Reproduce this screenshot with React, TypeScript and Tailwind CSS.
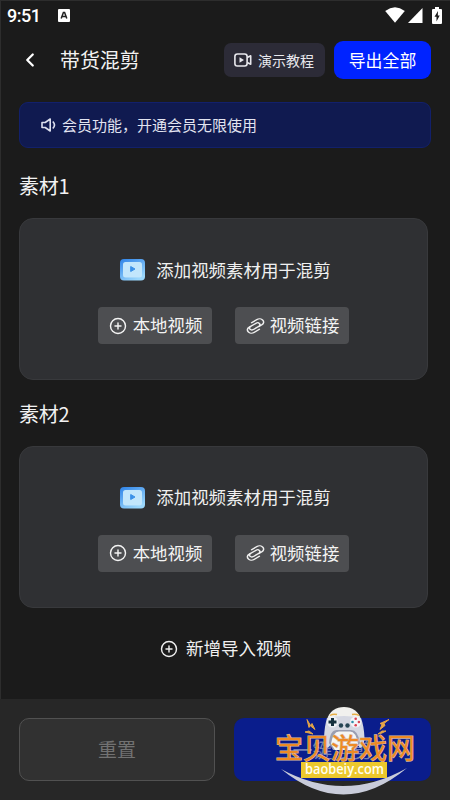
import { ChevronLeft, CirclePlus } from 'lucide-react';

const SECTIONS = [
  { id: 1, title: '素材1' },
  { id: 2, title: '素材2' },
];

function StatusBar() {
  return (
    <div className="flex h-8 items-center pl-[7px] pr-[8px] text-white">
      <span className="w-[51px] font-[Roboto] text-[18px] font-medium leading-none tracking-[-0.5px]">9:51</span>
      <svg width="12" height="13" viewBox="0 0 12 13" className="-mt-[2px]">
        <rect width="12" height="13" rx="1" fill="#fff" />
        <path d="M3.200 9.500 5.400 3.500h1.200L8.800 9.500M4.200 7.500h3.600" fill="none" stroke="#222" strokeWidth="1.500" />
      </svg>
      <svg width="20" height="16" viewBox="0 0 20 16" className="-mt-[2px] ml-auto">
        <path d="M0.200 4Q10-3.400 19.800 4L10 15.800Z" fill="#fff" />
      </svg>
      <svg width="15" height="15" viewBox="0 0 15 15" className="-mt-px ml-[3px]">
        <path d="M14.500 0v15H0Z" fill="#fff" />
      </svg>
      <svg width="10" height="17" viewBox="0 0 10 17" className="-mt-[2px] ml-[9px]">
        <path d="M3 0h4v2h2q1 0 1 1v13q0 1-1 1H1q-1 0-1-1V3q0-1 1-1h2Z" fill="#fff" />
        <path d="M6 4 2.500 9.700h2V14.500L7.700 8.500H5.800Z" fill="#1b1b1b" />
      </svg>
    </div>
  );
}

function CameraIcon() {
  return (
    <svg width="18" height="14" viewBox="0 0 18 14" fill="none" stroke="#e8e8ed" strokeWidth="1.600" strokeLinejoin="round">
      <rect x="0.900" y="1" width="12.200" height="12" rx="2.500" />
      <path d="M13.200 4.500 16.700 2.800v8.400l-3.500-1.700" />
      <path d="M5.500 4.300v5.400L10 7Z" fill="#e8e8ed" stroke="none" />
    </svg>
  );
}

function SpeakerIcon() {
  return (
    <svg width="16" height="14" viewBox="0 0 16 14" fill="none" stroke="#dcdfef" strokeWidth="1.600" strokeLinejoin="round">
      <path d="M1 4.500h3.200L9.200 1v12L4.200 9.500H1Z" />
      <path d="M11.800 3.500q3.400 3.500 0 7" />
    </svg>
  );
}

function VideoIcon() {
  return (
    <svg width="25" height="22" viewBox="0 0 25 22">
      <defs>
        <linearGradient id="frame" x1="0" y1="0" x2="0.600" y2="1">
          <stop offset="0" stopColor="#2d82e8" />
          <stop offset="1" stopColor="#9bd7fc" />
        </linearGradient>
      </defs>
      <rect width="25" height="21.500" rx="4" fill="url(#frame)" />
      <rect x="3" y="3" width="19" height="15.500" rx="2.500" fill="#c2e6fc" />
      <path d="M10.700 7.500v5L15 10Z" fill="#3b91e8" stroke="#3b91e8" strokeLinejoin="round" />
    </svg>
  );
}

function LinkIcon() {
  return (
    <svg width="19" height="16" viewBox="0 0 19 16" fill="none" stroke="#f0f0f0" strokeWidth="1.350" strokeLinecap="round">
      <g transform="translate(9.500 8) scale(1.200 0.950) rotate(-37) translate(-9.500 -8)">
        <path d="M10 12.700H4.400A3.400 3.400 0 0 1 4.400 5.900H11.700A2 2 0 0 1 11.700 9.900H6" />
        <path d="M9 3.300H14.600A3.400 3.400 0 0 1 14.600 10.100H11.500M5.800 9.900A2 2 0 0 1 5.800 5.900" />
      </g>
    </svg>
  );
}

function MaterialCard({ title }: { title: string }) {
  return (
    <section>
      <h2 className="h-[30px] text-[20px] leading-[30px] tracking-[-0.2px] text-[#f2f2f2]">{title}</h2>
      <div className="mt-[17px] flex h-[162px] w-[409px] flex-col items-center rounded-[14px] border border-[#38393c] bg-[#2f3033] pt-[38px]">
        <div className="flex h-[26px] items-center gap-[11px] pl-[4px] text-[17.450px] text-[#f0f0f0]">
          <VideoIcon />
          <span>添加视频素材用于混剪</span>
        </div>
        <div className="mt-[24px] flex gap-[23px]">
          <button className="flex h-[37px] w-[114px] items-center justify-center gap-[6px] rounded bg-[#4d4e51] pl-px text-[17.400px] text-[#f4f4f4]">
            <CirclePlus size={18} strokeWidth={1.9} />
            本地视频
          </button>
          <button className="flex h-[37px] w-[114px] items-center justify-center gap-[5px] rounded bg-[#4d4e51] pl-px text-[17.400px] text-[#f4f4f4]">
            <LinkIcon />
            视频链接
          </button>
        </div>
      </div>
    </section>
  );
}

function SiteLogo() {
  return (
    <svg width="144" height="94" viewBox="0 0 144 94" className="absolute bottom-0 left-[273px]">
      {/* smile */}
      <path d="M8 63Q71 114.500 134 62Q71 97.500 8 63Z" fill="#c9ccda" />
      {/* head and controller */}
      <path d="M54 14C56 5 63 1 71 1S86 5 88 14V38H54Z" fill="#f1f1ee" />
      <path d="M54 12Q71 8 88 12Q91 20 91.500 32Q91 40 87 42L82 35H60L55 42Q51 40 51 32Q51.500 20 54 12Z" fill="#d5d8e2" />
      <path d="M57 9.500q3-2 7-1M79 8.500q4-1 7 1" fill="none" stroke="#e6ae45" strokeWidth="1.500" />
      <path d="M56 37Q57 24 64 24H78Q85 24 87 37L82 44H60Z" fill="#9a9eb1" />
      <path d="M58 38Q60 25.500 66 25.500H77Q83 25.500 85 38L80 44H62Z" fill="#f6f6f4" />
      <circle cx="59.500" cy="16" r="5.500" fill="#edf0f4" />
      <path d="M59.500 12v8M55.500 16h8" stroke="#15303d" strokeWidth="3" />
      <circle cx="82.700" cy="16" r="5.500" fill="#f4f5f8" />
      <circle cx="82.700" cy="12.800" r="1.300" fill="#db4050" />
      <circle cx="82.700" cy="19.200" r="1.300" fill="#db4050" />
      <circle cx="79.500" cy="16" r="1.300" fill="#308fa9" />
      <circle cx="85.900" cy="16" r="1.300" fill="#d84756" />
      <circle cx="68" cy="19.500" r="2.200" fill="#254554" />
      <circle cx="74.500" cy="19.500" r="2.200" fill="#254554" />
      {/* sparks */}
      <path d="m34 13.500 3.500 6 1.500-2 3 6-5-4-1 2ZM32 26l4-1 4 3-4-1Z" fill="#e3a448" stroke="#e3a448" />
      <path d="m116 13.500-5 4 1 2-5 4 2-5-2-1ZM113 25l-4 0-4 3 4-1Z" fill="#e3a448" stroke="#e3a448" />
      <text
        x="2"
        y="53"
        textLength="140"
        fontSize="28"
        fontWeight="400"
        fill="#ee8a24"
        stroke="#d9b8a0"
        strokeWidth="1.200"
        paintOrder="stroke"
      >
        宝贝游戏网
      </text>
      <rect x="28" y="56" width="86" height="16" fill="#ecc82c" />
      <text x="32" y="68" textLength="79" fontFamily="Open Sans, sans-serif" fontSize="14" fontWeight="600" lengthAdjust="spacingAndGlyphs" fill="#fffef0">
        baobeiy.com
      </text>
    </svg>
  );
}

export default function App() {
  return (
    <div className="relative flex h-[800px] w-[450px] flex-col overflow-hidden bg-[#1b1b1b] font-['Noto_Sans_CJK_SC',sans-serif] shadow-[inset_1px_1px_0_#2d2d2d]">
      <StatusBar />

      <header className="mt-[9px] flex h-[38px] items-center pl-[19px] pr-[19px]">
        <ChevronLeft size={22} strokeWidth={2.5} className="text-white" />
        <h1 className="ml-[19px] text-[19.900px] leading-none text-[#f2f2f2]">带货混剪</h1>
        <button className="ml-auto flex h-[34px] w-[101px] items-center justify-center gap-[6px] rounded-[7px] bg-[#2c2b37] pr-px text-[14px] text-[#e8e8ed]">
          <CameraIcon />
          演示教程
        </button>
        <button className="ml-[9px] h-[38px] w-[97px] rounded-[9px] bg-[#0023ff] text-[16.900px] text-white">导出全部</button>
      </header>

      <main className="flex flex-1 flex-col px-[19px] pt-[23px]">
        <div className="flex h-[46px] w-[412px] shrink-0 items-center gap-[5px] rounded-[9px] border border-[#12206b] bg-[#101a50] pl-[21px] text-[15px] text-[#e2e4f0]">
          <SpeakerIcon />
          <span>会员功能，开通会员无限使用</span>
        </div>

        <div className="mt-[23px] flex flex-col gap-[18.500px]">
          {SECTIONS.map((s) => (
            <MaterialCard key={s.id} title={s.title} />
          ))}
        </div>

        <button className="mt-[28px] flex h-[26px] items-center justify-center gap-[8px] pl-px text-[17.500px] text-[#f0f0f0]">
          <CirclePlus size={18} strokeWidth={1.9} />
          新增导入视频
        </button>
      </main>

      <footer className="flex h-[101px] gap-[19px] bg-[#272727] pl-[19px] pt-[19px]">
        <button className="h-[63px] w-[196px] rounded-[10px] border border-[#515151] bg-[#313131] text-[19px] text-[#727272]">重置</button>
        <button className="h-[63px] w-[197px] rounded-[10px] bg-[#0a1d8c] text-[20px] text-[#7580b5]">一键混剪</button>
      </footer>

      <SiteLogo />
    </div>
  );
}
